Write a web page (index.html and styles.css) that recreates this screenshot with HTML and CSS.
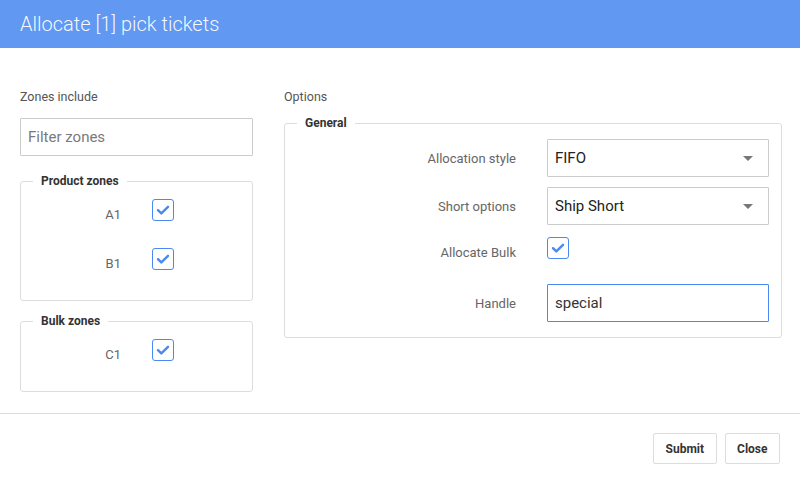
FILE: index.html
```html
<!DOCTYPE html>
<html>
<head>
<meta charset="utf-8">
<link rel="stylesheet" href="styles.css">
</head>
<body>
<div class="dialog">
  <header class="dlg-header">Allocate [1] pick tickets</header>
  <main class="dlg-body">
    <section class="col-left">
      <div class="section-label">Zones include</div>
      <div class="text-input placeholder">Filter zones</div>
      <fieldset class="group group-product">
        <legend>Product zones</legend>
        <div class="zone-row">
          <span class="zone-label">A1</span>
          <span class="checkbox"><svg viewBox="0 0 22 22" width="22" height="22"><path d="M6 11.2l3.3 3.2L16 7.8" fill="none" stroke="#4a88f2" stroke-width="2.4" stroke-linecap="round" stroke-linejoin="round"/></svg></span>
        </div>
        <div class="zone-row">
          <span class="zone-label">B1</span>
          <span class="checkbox"><svg viewBox="0 0 22 22" width="22" height="22"><path d="M6 11.2l3.3 3.2L16 7.8" fill="none" stroke="#4a88f2" stroke-width="2.4" stroke-linecap="round" stroke-linejoin="round"/></svg></span>
        </div>
      </fieldset>
      <fieldset class="group group-bulk">
        <legend>Bulk zones</legend>
        <div class="zone-row">
          <span class="zone-label">C1</span>
          <span class="checkbox"><svg viewBox="0 0 22 22" width="22" height="22"><path d="M6 11.2l3.3 3.2L16 7.8" fill="none" stroke="#4a88f2" stroke-width="2.4" stroke-linecap="round" stroke-linejoin="round"/></svg></span>
        </div>
      </fieldset>
    </section>
    <section class="col-right">
      <div class="section-label">Options</div>
      <fieldset class="group group-general">
        <legend>General</legend>
        <div class="opt-row">
          <span class="opt-label">Allocation style</span>
          <div class="select"><span>FIFO</span><span class="caret"></span></div>
        </div>
        <div class="opt-row">
          <span class="opt-label">Short options</span>
          <div class="select"><span>Ship Short</span><span class="caret"></span></div>
        </div>
        <div class="opt-row opt-check">
          <span class="opt-label">Allocate Bulk</span>
          <span class="checkbox"><svg viewBox="0 0 22 22" width="22" height="22"><path d="M6 11.2l3.3 3.2L16 7.8" fill="none" stroke="#4a88f2" stroke-width="2.4" stroke-linecap="round" stroke-linejoin="round"/></svg></span>
        </div>
        <div class="opt-row">
          <span class="opt-label">Handle</span>
          <div class="text-input focused">special</div>
        </div>
      </fieldset>
    </section>
  </main>
  <footer class="dlg-footer">
    <button class="btn">Submit</button>
    <button class="btn">Close</button>
  </footer>
</div>
</body>
</html>
```

FILE: styles.css
```css
* { box-sizing: border-box; }
html, body { margin: 0; padding: 0; background: #fff; }
body { font-family: Roboto, "Liberation Sans", sans-serif; color: #333; }

.dialog { width: 800px; height: 484px; }

.dlg-header {
  height: 48px;
  background: #6098f2;
  color: rgba(255,255,255,0.95);
  font-size: 20px;
  font-weight: 300;
  line-height: 48px;
  padding-left: 20px;
}

.dlg-body {
  display: flex;
  gap: 31px;
  padding: 41px 20px 21px 20px;
  border-bottom: 1px solid #ddd;
}

.col-left { width: 233px; flex: none; }
.col-right { flex: 1; }

.section-label {
  font-size: 12.5px;
  line-height: 15px;
  color: #555;
  height: 15px;
}

.text-input {
  height: 38px;
  border: 1px solid #ccc;
  border-radius: 1px;
  font-size: 15px;
  line-height: 36px;
  padding: 0 7px;
  color: #333;
}
.col-left .text-input { margin-top: 14px; }
.text-input.placeholder { color: #7a7a7a; }
.text-input.focused { border-color: #4a88f2; }

.group {
  margin: 0;
  border: 1px solid #ddd;
  border-radius: 3px;
  padding: 0 12px;
  min-width: 0;
}
.group legend {
  font-size: 12px;
  font-weight: 700;
  line-height: 14px;
  color: #333;
  padding: 0 8px;
}

.group-product { margin-top: 18px; padding-top: 11px; padding-bottom: 13px; }
.group-bulk { margin-top: 13px; padding-top: 11px; padding-bottom: 13px; }

.zone-row {
  display: flex;
  align-items: flex-start;
  height: 39px;
  margin-bottom: 10px;
}
.zone-row:last-child { margin-bottom: 0; }
.zone-label {
  width: 88px;
  text-align: right;
  font-size: 13px;
  line-height: 30px;
  padding-top: 1px;
  color: #666;
  margin-right: 31px;
}

.checkbox {
  width: 22px;
  height: 22px;
  border: 1px solid #4a88f2;
  border-radius: 3px;
  display: block;
  position: relative;
  flex: none;
}
.checkbox svg { position: absolute; left: -1px; top: -1px; }

.group-general { margin-top: 12px; padding-top: 9px; padding-bottom: 15px; }

.opt-row {
  display: flex;
  align-items: center;
  height: 38px;
  margin-bottom: 10px;
}
.opt-row:last-child { margin-bottom: 0; }
.opt-row.opt-check { align-items: flex-start; height: 37px; margin-top: 12px; }
.opt-label {
  width: 219px;
  flex: none;
  text-align: right;
  font-size: 13px;
  color: #666;
  margin-right: 31px;
}
.opt-row:first-child .opt-label { margin-top: -2px; }
.opt-check .opt-label { line-height: 30px; padding-top: 1px; }
.opt-row .select, .opt-row .text-input { width: 222px; }

.select {
  height: 38px;
  border: 1px solid #ccc;
  border-radius: 1px;
  font-size: 15px;
  padding: 0 15px 0 7px;
  color: #222;
  display: flex;
  align-items: center;
  justify-content: space-between;
}
.caret {
  width: 0;
  height: 0;
  border-left: 5px solid transparent;
  border-right: 5px solid transparent;
  border-top: 5px solid #777;
}

.dlg-footer {
  display: flex;
  justify-content: flex-end;
  gap: 8px;
  padding: 19px 20px 0 0;
}
.btn {
  font-family: Roboto, "Liberation Sans", sans-serif;
  font-size: 12px;
  font-weight: 700;
  color: #333;
  background: #fff;
  border: 1px solid #ddd;
  border-radius: 2px;
  height: 31px;
  padding: 0 11.5px;
}
```
